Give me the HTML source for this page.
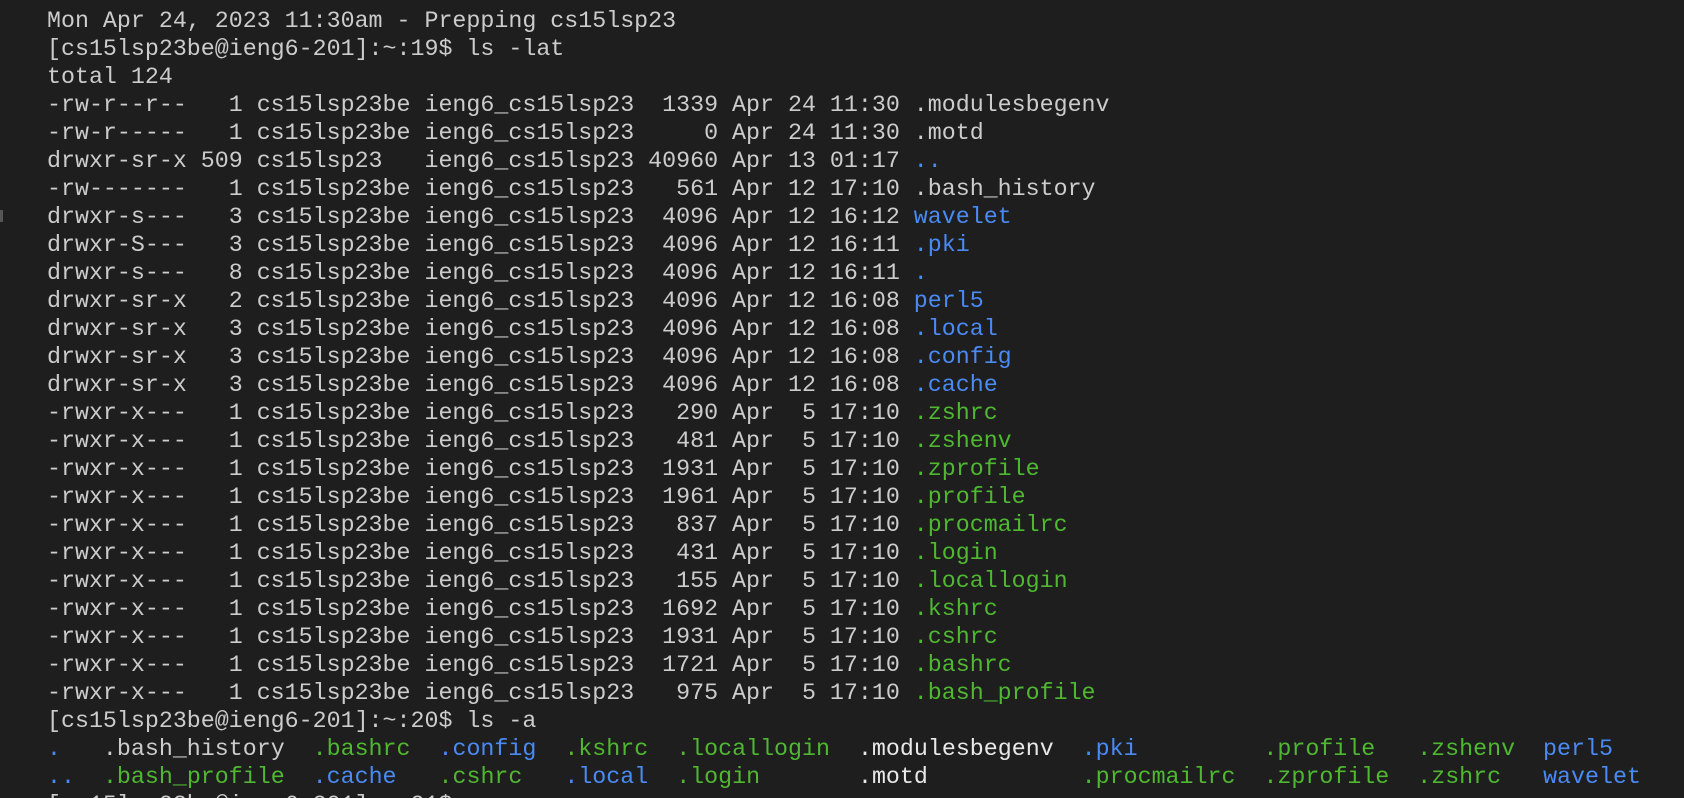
<!DOCTYPE html>
<html><head><meta charset="utf-8"><style>
html,body{margin:0;padding:0;background:#1e1e1e;width:1684px;height:798px;overflow:hidden}
#wrap{position:relative;width:1684px;height:798px;overflow:hidden}
pre{position:absolute;left:47px;top:7px;margin:0;font-family:"Liberation Mono",monospace;font-size:23.3px;line-height:28px;color:#cccccc;white-space:pre}
.b{color:#4a8af4}.g{color:#4fb830}.w{color:#e8e8e8}
.mark{position:absolute;left:0;top:210px;width:3px;height:12px;background:#555}
</style></head><body>
<div id="wrap">
<div class="mark"></div>
<pre>Mon Apr 24, 2023 11:30am - Prepping cs15lsp23
[cs15lsp23be@ieng6-201]:~:19$ ls -lat
total 124
-rw-r--r--   1 cs15lsp23be ieng6_cs15lsp23  1339 Apr 24 11:30 .modulesbegenv
-rw-r-----   1 cs15lsp23be ieng6_cs15lsp23     0 Apr 24 11:30 .motd
drwxr-sr-x 509 cs15lsp23   ieng6_cs15lsp23 40960 Apr 13 01:17 <span class="b">..</span>
-rw-------   1 cs15lsp23be ieng6_cs15lsp23   561 Apr 12 17:10 .bash_history
drwxr-s---   3 cs15lsp23be ieng6_cs15lsp23  4096 Apr 12 16:12 <span class="b">wavelet</span>
drwxr-S---   3 cs15lsp23be ieng6_cs15lsp23  4096 Apr 12 16:11 <span class="b">.pki</span>
drwxr-s---   8 cs15lsp23be ieng6_cs15lsp23  4096 Apr 12 16:11 <span class="b">.</span>
drwxr-sr-x   2 cs15lsp23be ieng6_cs15lsp23  4096 Apr 12 16:08 <span class="b">perl5</span>
drwxr-sr-x   3 cs15lsp23be ieng6_cs15lsp23  4096 Apr 12 16:08 <span class="b">.local</span>
drwxr-sr-x   3 cs15lsp23be ieng6_cs15lsp23  4096 Apr 12 16:08 <span class="b">.config</span>
drwxr-sr-x   3 cs15lsp23be ieng6_cs15lsp23  4096 Apr 12 16:08 <span class="b">.cache</span>
-rwxr-x---   1 cs15lsp23be ieng6_cs15lsp23   290 Apr  5 17:10 <span class="g">.zshrc</span>
-rwxr-x---   1 cs15lsp23be ieng6_cs15lsp23   481 Apr  5 17:10 <span class="g">.zshenv</span>
-rwxr-x---   1 cs15lsp23be ieng6_cs15lsp23  1931 Apr  5 17:10 <span class="g">.zprofile</span>
-rwxr-x---   1 cs15lsp23be ieng6_cs15lsp23  1961 Apr  5 17:10 <span class="g">.profile</span>
-rwxr-x---   1 cs15lsp23be ieng6_cs15lsp23   837 Apr  5 17:10 <span class="g">.procmailrc</span>
-rwxr-x---   1 cs15lsp23be ieng6_cs15lsp23   431 Apr  5 17:10 <span class="g">.login</span>
-rwxr-x---   1 cs15lsp23be ieng6_cs15lsp23   155 Apr  5 17:10 <span class="g">.locallogin</span>
-rwxr-x---   1 cs15lsp23be ieng6_cs15lsp23  1692 Apr  5 17:10 <span class="g">.kshrc</span>
-rwxr-x---   1 cs15lsp23be ieng6_cs15lsp23  1931 Apr  5 17:10 <span class="g">.cshrc</span>
-rwxr-x---   1 cs15lsp23be ieng6_cs15lsp23  1721 Apr  5 17:10 <span class="g">.bashrc</span>
-rwxr-x---   1 cs15lsp23be ieng6_cs15lsp23   975 Apr  5 17:10 <span class="g">.bash_profile</span>
[cs15lsp23be@ieng6-201]:~:20$ ls -a
<span class="b">.</span>   .bash_history  <span class="g">.bashrc</span>  <span class="b">.config</span>  <span class="g">.kshrc</span>  <span class="g">.locallogin</span>  <span class="w">.modulesbegenv</span>  <span class="b">.pki</span>         <span class="g">.profile</span>   <span class="g">.zshenv</span>  <span class="b">perl5</span>
<span class="b">..</span>  <span class="g">.bash_profile</span>  <span class="b">.cache</span>   <span class="g">.cshrc</span>   <span class="b">.local</span>  <span class="g">.login</span>       <span class="w">.motd</span>           <span class="g">.procmailrc</span>  <span class="g">.zprofile</span>  <span class="g">.zshrc</span>   <span class="b">wavelet</span>
[cs15lsp23be@ieng6-201]:~:21$ </pre>
</div>
</body></html>
